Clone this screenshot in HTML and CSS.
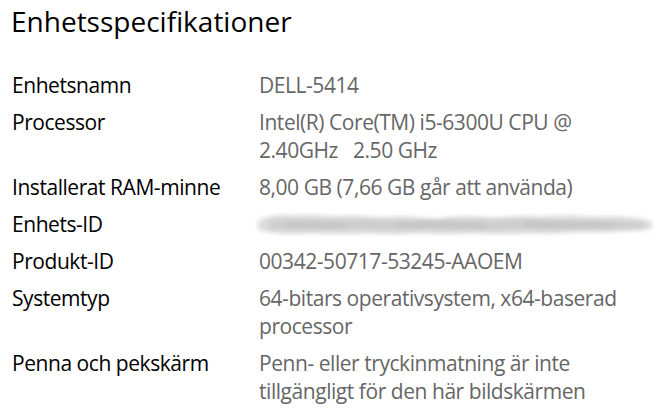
FILE: index.html
```html
<html lang="sv">
  <head>
    <meta charset="UTF-8" />
    <meta name="viewport" content="width=device-width, initial-scale=1.0" />
    <title>Enhetsspecifikationer</title>
    <link rel="stylesheet" href="styles.css">
  </head>
  <body>
    <div class="page">
      <h1 class="title">Enhetsspecifikationer</h1>
      <div class="specs">
        <div class="label">Enhetsnamn</div>
        <div class="value">DELL-5414</div>

        <div class="label">Processor</div>
        <div class="value">Intel(R) Core(TM) i5-6300U CPU @<br>2.40GHz&nbsp;&nbsp; 2.50 GHz</div>

        <div class="label">Installerat RAM-minne</div>
        <div class="value">8,00 GB (7,66 GB går att använda)</div>

        <div class="label">Enhets-ID</div>
        <div class="value">
          <svg class="smudge" width="400" height="28" viewBox="0 0 400 28">
            <defs>
              <filter id="soft" x="-5%" y="-50%" width="110%" height="200%">
                <feGaussianBlur stdDeviation="2" />
              </filter>
            </defs>
            <path filter="url(#soft)" fill="#dcdcdc"
              d="M3 11 C14 5 28 4 40 6 C56 3 70 7 84 6 C100 4 116 8 132 7 C150 5 166 8 182 9 C198 6 214 5 230 7 C246 9 262 5 278 6 C294 7 310 4 326 6 C342 8 356 5 370 7 C382 8 392 9 397 12 L397 19 C386 21 372 20 358 22 C342 24 326 21 310 23 C292 25 276 22 258 24 C240 25 222 22 204 24 C186 25 168 22 150 24 C132 25 114 22 96 24 C78 25 60 22 42 24 C26 25 12 22 3 20 Z" />
            <path filter="url(#soft)" fill="#cdcdcd"
              d="M14 11 C40 8 66 11 92 10 C118 9 144 12 170 11 C196 9 222 12 248 10 C274 9 300 12 326 11 C350 10 372 12 388 12 L388 18 C362 20 338 17 312 19 C286 21 260 18 234 20 C208 21 182 18 156 20 C130 21 104 18 78 20 C52 21 30 19 14 19 Z" />
            <path filter="url(#soft)" fill="#c4c4c4"
              d="M30 13 C50 11 70 14 90 13 L90 17 C70 18 50 16 30 17 Z M140 13 C170 11 200 14 230 13 L230 17 C200 18 170 16 140 17 Z M270 12 C300 11 330 13 360 13 L360 17 C330 18 300 16 270 17 Z" />
          </svg>
        </div>

        <div class="label">Produkt-ID</div>
        <div class="value">00342-50717-53245-AAOEM</div>

        <div class="label">Systemtyp</div>
        <div class="value">64-bitars operativsystem, x64-baserad<br>processor</div>

        <div class="label">Penna och pekskärm</div>
        <div class="value">Penn- eller tryckinmatning är inte<br>tillgängligt för den här bildskärmen</div>
      </div>
    </div>
  </body>
</html>
```
FILE: styles.css
```css
* {
  margin: 0;
  padding: 0;
  box-sizing: border-box;
}
body {
  background-color: #ffffff;
  font-family: "Open Sans", "Noto Sans", sans-serif;
  color: #000000;
}
.page {
  padding: 3px 0 0 12px;
}
.title {
  font-size: 28px;
  font-weight: 400;
  line-height: 36px;
  margin-bottom: 32px;
  margin-left: -1px;
}
.specs {
  display: grid;
  grid-template-columns: 247px auto;
  row-gap: 9px;
  font-size: 21px;
  line-height: 28px;
  letter-spacing: -0.45px;
}
.label {
  color: #000000;
}
.value {
  color: #666666;
}
.smudge {
  display: block;
  margin-left: -4px;
}
```
